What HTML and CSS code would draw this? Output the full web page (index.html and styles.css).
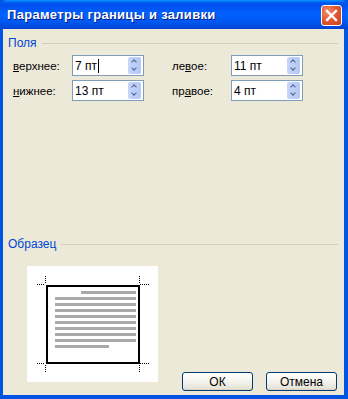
FILE: index.html
```html
<!DOCTYPE html>
<html lang="ru">
<head>
  <meta charset="UTF-8" />
  <title>Параметры границы и заливки</title>
  <link rel="stylesheet" href="styles.css">
</head>
<body>
  <div class="window">
    <div class="titlebar">
      <span class="title">Параметры границы и заливки</span>
      <button class="close-btn" title="Закрыть">
        <svg width="13" height="13" viewBox="0 0 13 13">
          <path d="M2 2 L11 11 M11 2 L2 11" stroke="#fff" stroke-width="2.4" stroke-linecap="square"/>
        </svg>
      </button>
    </div>

    <div class="client">
      <div class="group-head">
        <span class="group-label">Поля</span>
        <span class="group-line"></span>
      </div>

      <div class="fields">
        <label class="field-label" for="top"><u>в</u>ерхнее:</label>
        <div class="spin-input">
          <span class="value" id="top">7 пт<span class="caret"></span></span>
          <span class="spin"><i class="up"></i><i class="down"></i></span>
        </div>
        <label class="field-label right-col" for="left">ле<u>в</u>ое:</label>
        <div class="spin-input">
          <span class="value" id="left">11 пт</span>
          <span class="spin"><i class="up"></i><i class="down"></i></span>
        </div>

        <label class="field-label" for="bottom"><u>н</u>ижнее:</label>
        <div class="spin-input">
          <span class="value" id="bottom">13 пт</span>
          <span class="spin"><i class="up"></i><i class="down"></i></span>
        </div>
        <label class="field-label right-col" for="right">пр<u>а</u>вое:</label>
        <div class="spin-input">
          <span class="value" id="right">4 пт</span>
          <span class="spin"><i class="up"></i><i class="down"></i></span>
        </div>
      </div>

      <div class="group-head sample-head">
        <span class="group-label">Образец</span>
        <span class="group-line"></span>
      </div>

      <div class="preview">
        <svg width="131" height="116" viewBox="0 0 131 116">
          <rect x="20" y="20" width="92" height="77" fill="none" stroke="#000" stroke-width="2"/>
          <g fill="#a9a9a9">
            <rect x="54" y="25" width="55" height="3"/>
            <rect x="28" y="31" width="81" height="3"/>
            <rect x="28" y="37" width="81" height="3"/>
            <rect x="28" y="43" width="81" height="3"/>
            <rect x="28" y="49" width="81" height="3"/>
            <rect x="28" y="55" width="81" height="3"/>
            <rect x="28" y="61" width="81" height="3"/>
            <rect x="28" y="67" width="81" height="3"/>
            <rect x="28" y="73" width="81" height="3"/>
            <rect x="28" y="79" width="54" height="3"/>
          </g>
          <g stroke="#000" stroke-width="1" stroke-dasharray="1 1">
            <path d="M18.5 10 V18 M10 18.5 H18"/>
            <path d="M112.5 10 V18 M113 18.5 H122"/>
            <path d="M18.5 99 V107 M10 97.5 H18"/>
            <path d="M112.5 99 V107 M113 97.5 H122"/>
          </g>
        </svg>
      </div>

      <div class="actions">
        <button class="btn">ОК</button>
        <button class="btn">Отмена</button>
      </div>
    </div>
  </div>
</body>
</html>
```

FILE: styles.css
```css
body {
  margin: 0;
  font-family: "Liberation Sans", Arial, sans-serif;
  font-size: 12px;
  background-color: #ece9d8;
}

.window {
  width: 348px;
  height: 399px;
  display: flex;
  flex-direction: column;
  background-color: #0054e3;
  box-sizing: border-box;
  padding: 0 4px 4px 3px;
}

.titlebar {
  height: 29px;
  margin: 0 -4px 0 -3px;
  padding: 0 6px 0 7px;
  display: flex;
  align-items: center;
  justify-content: space-between;
  border-radius: 7px 7px 0 0;
  background: linear-gradient(#0997ff 0, #0053ee 3px, #0050ee 6px, #0062ff 14px, #0058f0 22px, #0046d8 28px, #003dd0 29px);
}

.title {
  color: #ffffff;
  font-weight: bold;
  font-size: 13px;
  letter-spacing: 0.3px;
  text-shadow: 1px 1px 0 #0a1883;
  margin-top: -1px;
}

.close-btn {
  width: 21px;
  height: 21px;
  padding: 0;
  border: 1px solid #ffffff;
  border-radius: 3px;
  background: radial-gradient(circle at 30% 30%, #f0906a 0, #e25a33 45%, #c8401c 100%);
  display: flex;
  align-items: center;
  justify-content: center;
  margin-top: 1px;
}

.client {
  flex: 1;
  background-color: #ece9d8;
  display: flex;
  flex-direction: column;
  padding: 0 6px 0 5px;
}

.group-head {
  display: flex;
  align-items: center;
  margin-top: 7px;
  height: 14px;
}

.group-label {
  color: #0046d5;
  padding-right: 5px;
}

.group-line {
  flex: 1;
  height: 0;
  border-top: 1px solid #d0d0bf;
  margin-top: 1px;
}

.fields {
  display: grid;
  grid-template-columns: 59px 72px 87px 72px;
  grid-auto-rows: 21px;
  row-gap: 4px;
  margin: 5px 0 0 5px;
  align-items: center;
}

.right-col {
  margin-left: 28px;
}

.field-label {
  color: #000000;
  font-size: 11.5px;
}

.spin-input {
  position: relative;
  height: 21px;
  box-sizing: border-box;
  border: 1px solid #7f9db9;
  background-color: #ffffff;
  display: flex;
  align-items: center;
  padding-left: 2px;
}

.value {
  font-size: 12px;
  display: flex;
  align-items: center;
}

.caret {
  display: inline-block;
  width: 1px;
  height: 14px;
  margin-left: 1px;
  background-color: #000000;
}

.spin {
  position: absolute;
  top: 1px;
  right: 2px;
  width: 13px;
  height: 17px;
  border-radius: 2px;
  background: linear-gradient(90deg, #c6d6fb, #b4c8f6);
  display: flex;
  flex-direction: column;
}

.spin i {
  flex: 1;
  display: block;
  position: relative;
}

.spin i::after {
  content: "";
  position: absolute;
  left: 4px;
  width: 3px;
  height: 3px;
  border-left: 1.5px solid #4d6185;
  border-top: 1.5px solid #4d6185;
}

.spin .up::after {
  top: 3px;
  transform: rotate(45deg);
}

.spin .down::after {
  top: 0;
  transform: rotate(-135deg);
}

.sample-head {
  margin-top: 136px;
}

.preview {
  width: 131px;
  height: 116px;
  margin: 15px 0 0 19px;
  background-color: #ffffff;
}

.preview svg {
  display: block;
}

.actions {
  display: flex;
  gap: 13px;
  margin: -10px 0 0 174px;
}

.btn {
  width: 71px;
  height: 19px;
  padding: 0;
  border: 1px solid #003c74;
  border-radius: 3px;
  background: linear-gradient(#ffffff 0, #f4f3ee 50%, #e6e3d6 90%, #d6d0c5 100%);
  font-family: inherit;
  font-size: 12px;
  color: #000000;
}
```
